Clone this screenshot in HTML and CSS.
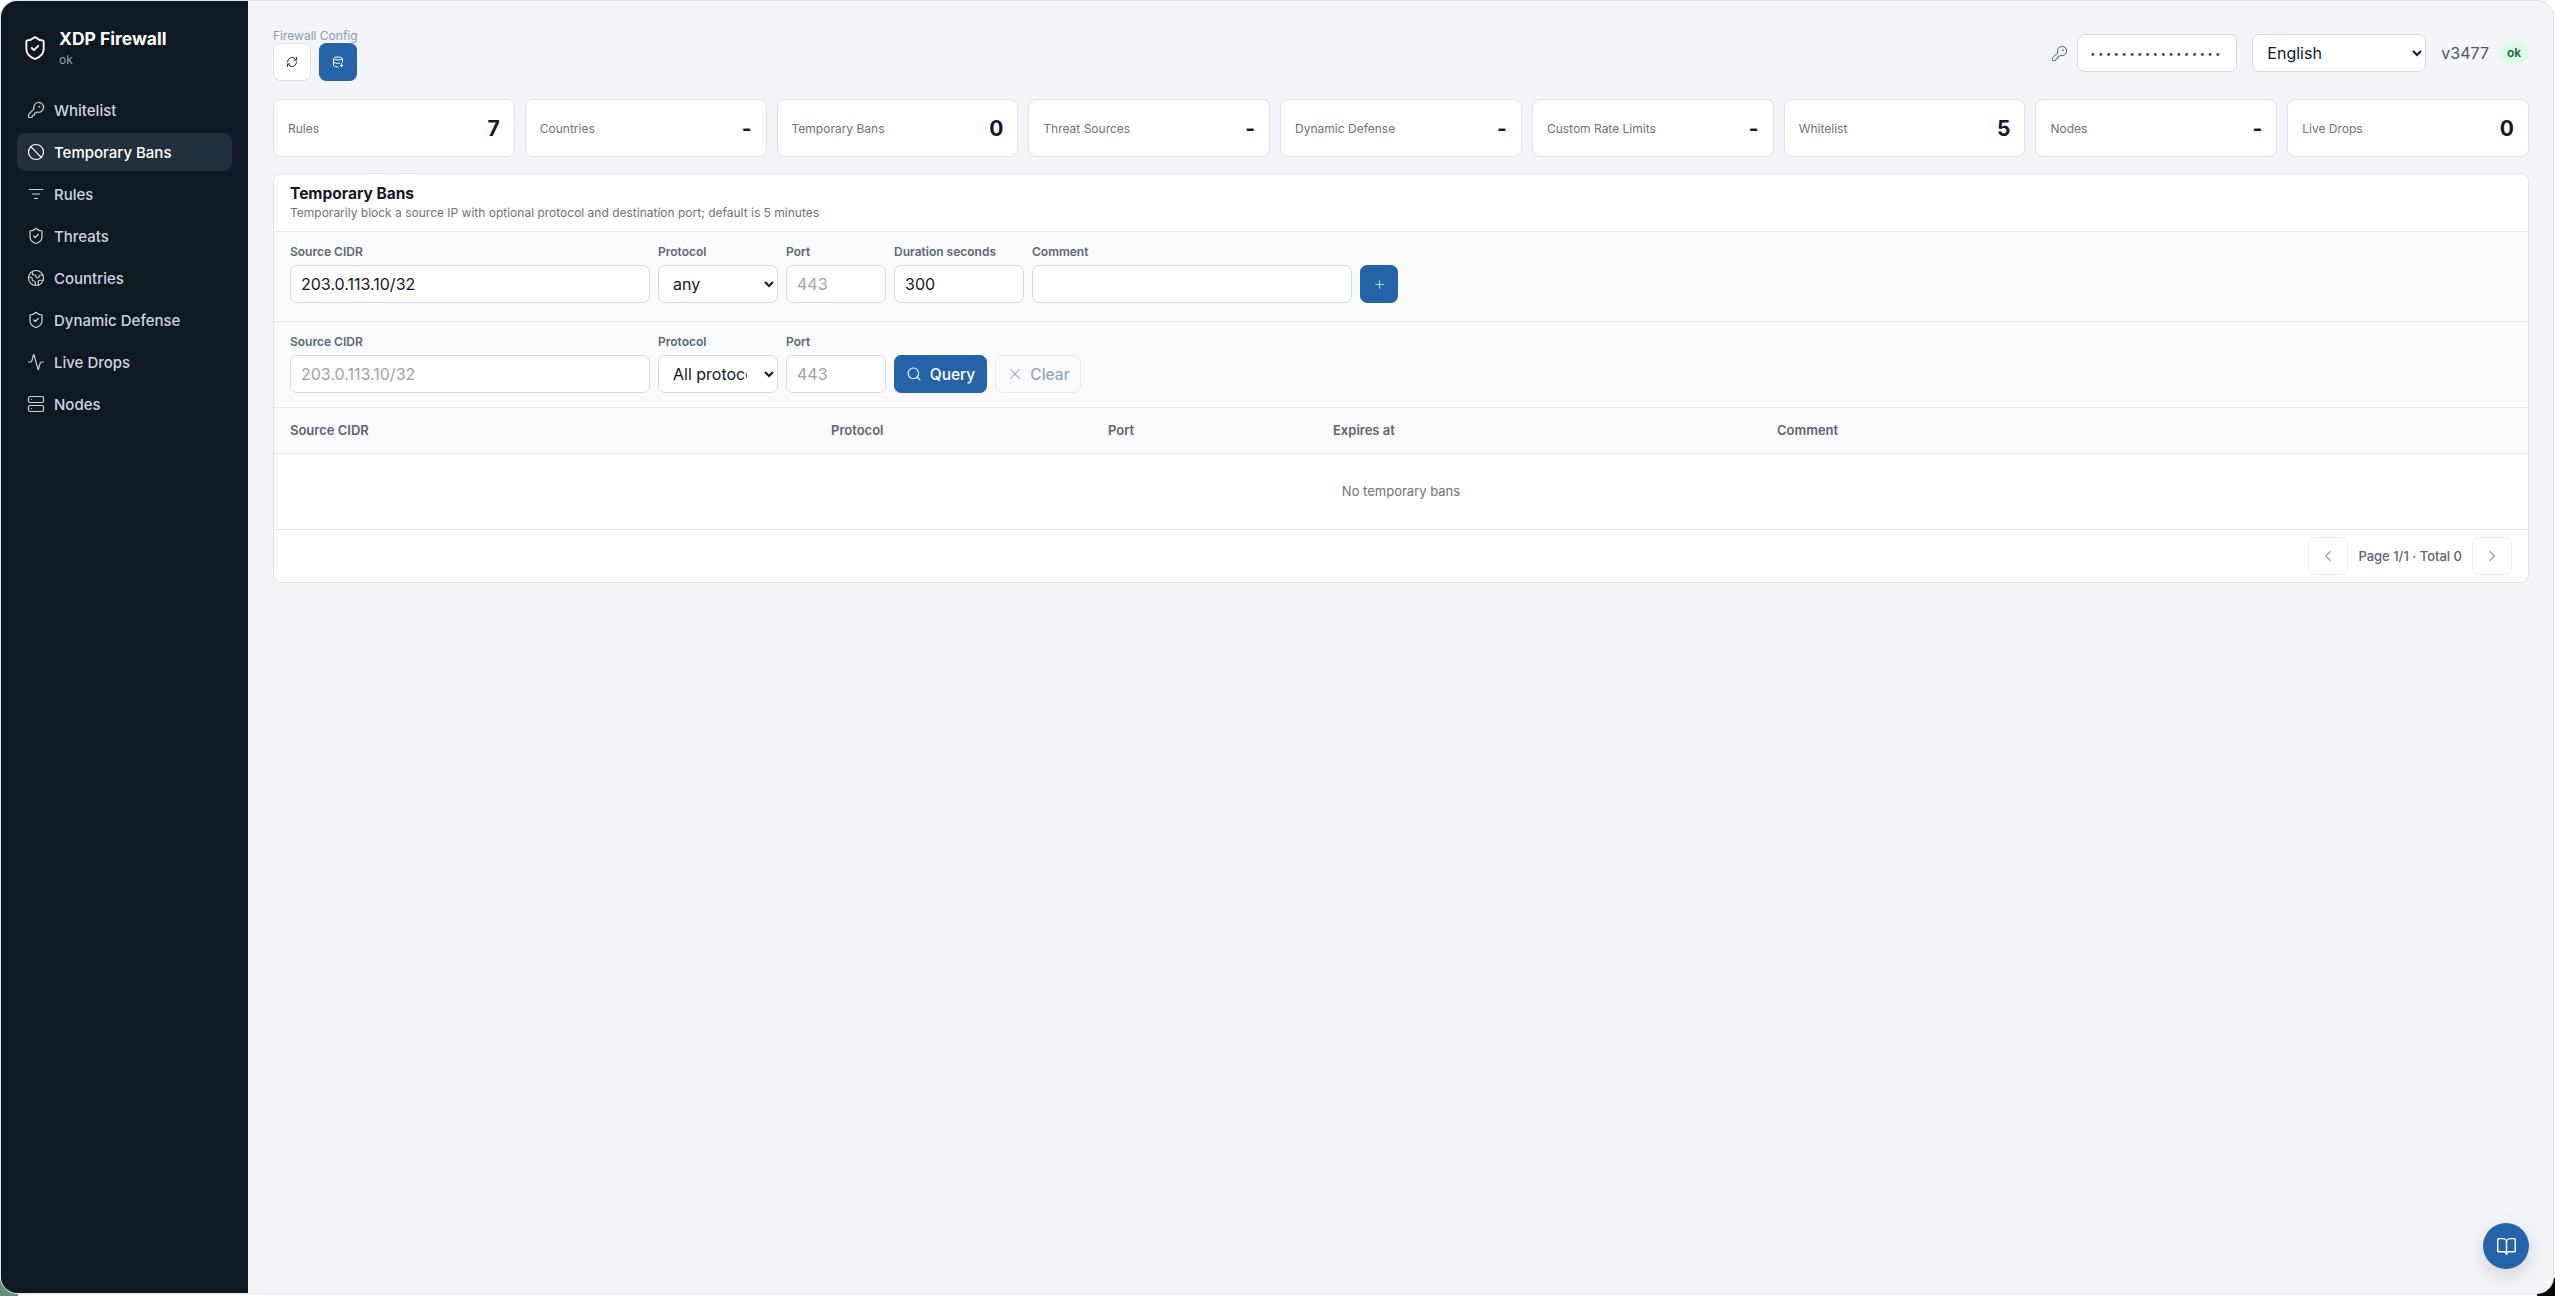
FILE: index.html
```html
<!DOCTYPE html>
<html lang="en">
<head>
  <meta charset="UTF-8">
  <meta name="viewport" content="width=device-width, initial-scale=1.0">
  <link rel="stylesheet" href="styles.css">
  <title>XDP Firewall</title>
</head>
<body>

  <svg class="icon-defs" width="0" height="0">
    <symbol id="i-shield" viewBox="0 0 24 24"><path d="M20 13c0 5-3.5 7.5-7.66 8.95a1 1 0 0 1-.67-.01C7.5 20.5 4 18 4 13V6a1 1 0 0 1 1-1c2 0 4.5-1.2 6.24-2.72a1.17 1.17 0 0 1 1.52 0C14.51 3.81 17 5 19 5a1 1 0 0 1 1 1z"/><path d="m9 12 2 2 4-4"/></symbol>
    <symbol id="i-key" viewBox="0 0 24 24"><path d="M2.586 17.414A2 2 0 0 0 2 18.828V21a1 1 0 0 0 1 1h3a1 1 0 0 0 1-1v-1a1 1 0 0 1 1-1h1a1 1 0 0 0 1-1v-1a1 1 0 0 1 1-1h.172a2 2 0 0 0 1.414-.586l.814-.814a6.5 6.5 0 1 0-4-4z"/><circle cx="16.5" cy="7.5" r=".5"/></symbol>
    <symbol id="i-ban" viewBox="0 0 24 24"><circle cx="12" cy="12" r="10"/><path d="m4.9 4.9 14.2 14.2"/></symbol>
    <symbol id="i-filter" viewBox="0 0 24 24"><path d="M3 6h18"/><path d="M7 12h10"/><path d="M10 18h4"/></symbol>
    <symbol id="i-earth" viewBox="0 0 24 24"><path d="M21.54 15H17a2 2 0 0 0-2 2v4.54"/><path d="M7 3.34V5a3 3 0 0 0 3 3a2 2 0 0 1 2 2c0 1.1.9 2 2 2a2 2 0 0 0 2-2c0-1.1.9-2 2-2h3.17"/><path d="M11 21.95V18a2 2 0 0 0-2-2a2 2 0 0 1-2-2v-1a2 2 0 0 0-2-2H2.05"/><circle cx="12" cy="12" r="10"/></symbol>
    <symbol id="i-activity" viewBox="0 0 24 24"><path d="M22 12h-2.48a2 2 0 0 0-1.93 1.46l-2.35 8.36a.25.25 0 0 1-.48 0L9.24 2.18a.25.25 0 0 0-.48 0l-2.35 8.36A2 2 0 0 1 4.49 12H2"/></symbol>
    <symbol id="i-server" viewBox="0 0 24 24"><rect x="2" y="2" width="20" height="8" rx="2"/><rect x="2" y="14" width="20" height="8" rx="2"/><path d="M6 6h.01"/><path d="M6 18h.01"/></symbol>
    <symbol id="i-refresh" viewBox="0 0 24 24"><path d="M3 12a9 9 0 0 1 9-9 9.75 9.75 0 0 1 6.74 2.74L21 8"/><path d="M21 3v5h-5"/><path d="M21 12a9 9 0 0 1-9 9 9.75 9.75 0 0 1-6.74-2.74L3 16"/><path d="M8 16H3v5"/></symbol>
    <symbol id="i-database" viewBox="0 0 24 24"><ellipse cx="12" cy="5" rx="9" ry="3"/><path d="M3 5v14a9 3 0 0 0 9 3"/><path d="M21 5v7"/><path d="M3 12a9 3 0 0 0 12 2.8"/><path d="M19 15v6"/><path d="m16.5 18.5 2.5 2.5 2.5-2.5"/></symbol>
    <symbol id="i-search" viewBox="0 0 24 24"><circle cx="11" cy="11" r="8"/><path d="m21 21-4.3-4.3"/></symbol>
    <symbol id="i-x" viewBox="0 0 24 24"><path d="M18 6 6 18"/><path d="m6 6 12 12"/></symbol>
    <symbol id="i-left" viewBox="0 0 24 24"><path d="m15 18-6-6 6-6"/></symbol>
    <symbol id="i-right" viewBox="0 0 24 24"><path d="m9 18 6-6-6-6"/></symbol>
    <symbol id="i-plus" viewBox="0 0 24 24"><path d="M5 12h14"/><path d="M12 5v14"/></symbol>
    <symbol id="i-book" viewBox="0 0 24 24"><path d="M12 7v14"/><path d="M3 18a1 1 0 0 1-1-1V4a1 1 0 0 1 1-1h5a4 4 0 0 1 4 4 4 4 0 0 1 4-4h5a1 1 0 0 1 1 1v13a1 1 0 0 1-1 1h-6a3 3 0 0 0-3 3 3 3 0 0 0-3-3z"/></symbol>
  </svg>

  <div class="window">
    <aside class="sidebar">
      <div class="brand">
        <svg class="brand-icon"><use href="#i-shield"/></svg>
        <div>
          <div class="brand-name">XDP Firewall</div>
          <div class="brand-status">ok</div>
        </div>
      </div>
      <nav class="nav">
        <a class="nav-item"><svg class="icon"><use href="#i-key"/></svg>Whitelist</a>
        <a class="nav-item active"><svg class="icon"><use href="#i-ban"/></svg>Temporary Bans</a>
        <a class="nav-item"><svg class="icon"><use href="#i-filter"/></svg>Rules</a>
        <a class="nav-item"><svg class="icon"><use href="#i-shield"/></svg>Threats</a>
        <a class="nav-item"><svg class="icon"><use href="#i-earth"/></svg>Countries</a>
        <a class="nav-item"><svg class="icon"><use href="#i-shield"/></svg>Dynamic Defense</a>
        <a class="nav-item"><svg class="icon"><use href="#i-activity"/></svg>Live Drops</a>
        <a class="nav-item"><svg class="icon"><use href="#i-server"/></svg>Nodes</a>
      </nav>
    </aside>

    <main class="main">
      <header class="topbar">
        <div>
          <div class="config-label">Firewall Config</div>
          <div class="config-btns">
            <button class="btn btn-icon"><svg class="icon-tool"><use href="#i-refresh"/></svg></button>
            <button class="btn btn-icon btn-primary"><svg class="icon-tool"><use href="#i-database"/></svg></button>
          </div>
        </div>
        <div class="topbar-right">
          <svg class="token-icon"><use href="#i-key"/></svg>
          <input class="field token-input" type="password" value="abcdefghijklmnopqrst">
          <select class="field lang-select"><option>English</option></select>
          <span class="version">v3477</span>
          <span class="badge">ok</span>
        </div>
      </header>

      <section class="stats">
        <div class="stat"><span class="stat-label">Rules</span><span class="stat-value">7</span></div>
        <div class="stat"><span class="stat-label">Countries</span><span class="stat-value">-</span></div>
        <div class="stat"><span class="stat-label">Temporary Bans</span><span class="stat-value">0</span></div>
        <div class="stat"><span class="stat-label">Threat Sources</span><span class="stat-value">-</span></div>
        <div class="stat"><span class="stat-label">Dynamic Defense</span><span class="stat-value">-</span></div>
        <div class="stat"><span class="stat-label">Custom Rate Limits</span><span class="stat-value">-</span></div>
        <div class="stat"><span class="stat-label">Whitelist</span><span class="stat-value">5</span></div>
        <div class="stat"><span class="stat-label">Nodes</span><span class="stat-value">-</span></div>
        <div class="stat"><span class="stat-label">Live Drops</span><span class="stat-value">0</span></div>
      </section>

      <section class="panel">
        <div class="panel-head">
          <h2>Temporary Bans</h2>
          <p>Temporarily block a source IP with optional protocol and destination port; default is 5 minutes</p>
        </div>

        <div class="form-row add-row">
          <label class="group w-cidr"><span>Source CIDR</span><input class="field" type="text" value="203.0.113.10/32"></label>
          <label class="group w-proto"><span>Protocol</span><select class="field"><option>any</option></select></label>
          <label class="group w-port"><span>Port</span><input class="field" type="text" placeholder="443"></label>
          <label class="group w-duration"><span>Duration seconds</span><input class="field" type="text" value="300"></label>
          <label class="group w-comment"><span>Comment</span><input class="field" type="text"></label>
          <button class="btn btn-icon btn-primary"><svg class="icon-plus"><use href="#i-plus"/></svg></button>
        </div>

        <div class="form-row">
          <label class="group w-cidr"><span>Source CIDR</span><input class="field" type="text" placeholder="203.0.113.10/32"></label>
          <label class="group w-proto"><span>Protocol</span><select class="field"><option>All protocols</option></select></label>
          <label class="group w-port"><span>Port</span><input class="field" type="text" placeholder="443"></label>
          <button class="btn btn-primary btn-query"><svg class="icon-search"><use href="#i-search"/></svg>Query</button>
          <button class="btn btn-clear" disabled><svg class="icon-x"><use href="#i-x"/></svg>Clear</button>
        </div>

        <table class="table">
          <thead>
            <tr>
              <th class="col-cidr">Source CIDR</th>
              <th class="col-proto">Protocol</th>
              <th class="col-port">Port</th>
              <th class="col-exp">Expires at</th>
              <th>Comment</th>
            </tr>
          </thead>
          <tbody>
            <tr><td class="empty" colspan="5">No temporary bans</td></tr>
          </tbody>
        </table>

        <div class="pager">
          <button class="btn btn-icon btn-page"><svg class="icon-chevron"><use href="#i-left"/></svg></button>
          <span>Page 1/1 · Total 0</span>
          <button class="btn btn-icon btn-page"><svg class="icon-chevron"><use href="#i-right"/></svg></button>
        </div>
      </section>

      <button class="help-btn"><svg class="icon-help"><use href="#i-book"/></svg></button>
    </main>
  </div>

</body>
</html>
```

FILE: styles.css
```css
* {
  box-sizing: border-box;
}

html,
body {
  height: 100%;
}

/* desktop only shows in the two bottom corners, behind the window radius */
body {
  margin: 0;
  background:
    linear-gradient(#5f9079, #5f9079) 0 100% / 18px 18px no-repeat,
    linear-gradient(#050505, #050505) 100% 100% / 18px 18px no-repeat,
    #fff;
  font-family: Inter, "Noto Sans", sans-serif;
  color: #111827;
  overflow: hidden;
}

.icon-defs {
  position: absolute;
}

svg {
  fill: none;
  stroke: currentColor;
  stroke-width: 2;
  stroke-linecap: round;
  stroke-linejoin: round;
  flex-shrink: 0;
}

.window {
  display: flex;
  width: 2554px;
  height: 1294px;
  border-radius: 17px;
  overflow: hidden;
  background-color: #f3f5f8;
  border: 1px solid #dfe3e8;
}

/* sidebar */
.sidebar {
  width: 247px;
  flex-shrink: 0;
  background-color: #0f1923;
  color: #cbd5e1;
}

.brand {
  display: flex;
  align-items: center;
  gap: 11px;
  padding: 8px 0 0 21px;
  height: 86px;
}

.brand-icon {
  width: 26px;
  height: 26px;
  color: #fff;
  stroke-width: 1.7;
}

.brand-name {
  font-size: 17.5px;
  font-weight: 700;
  line-height: 24px;
  color: #fff;
}

.brand-status {
  font-size: 12px;
  line-height: 18px;
  color: #94a3b8;
}

.nav {
  display: flex;
  flex-direction: column;
  gap: 4px;
  padding: 4px 16px 0;
}

.nav-item {
  display: flex;
  align-items: center;
  gap: 9px;
  height: 38px;
  padding: 0 10px;
  border-radius: 8px;
  font-size: 15px;
  font-weight: 500;
}

.nav-item .icon {
  width: 18px;
  height: 18px;
  stroke-width: 1.6;
}

.nav-item.active {
  background-color: #222f3d;
  color: #fff;
}

/* main area */
.main {
  flex: 1;
  min-width: 0;
  padding: 28px 24px 0 25px;
  position: relative;
}

.topbar {
  display: flex;
  justify-content: space-between;
  align-items: flex-start;
  margin-bottom: 18px;
}

.config-label {
  font-size: 12px;
  line-height: 14px;
  color: #8a9aad;
}

.config-btns {
  display: flex;
  gap: 8px;
}

.btn {
  display: inline-flex;
  align-items: center;
  justify-content: center;
  height: 38px;
  border: 1px solid #d9e0e8;
  border-radius: 7px;
  background-color: #fff;
  font-family: inherit;
  font-size: 15.5px;
  font-weight: 500;
  color: #1f2937;
  padding: 0;
}

.btn-icon {
  width: 38px;
}

.btn-primary {
  background-color: #2563a9;
  border-color: #2563a9;
  color: #fff;
}

.icon-tool {
  width: 12px;
  height: 12px;
  stroke-width: 2;
}

.icon-plus {
  width: 13px;
  height: 13px;
  color: #c7d9ee;
}

.icon-search {
  width: 16px;
  height: 16px;
  stroke-width: 1.6;
}

.icon-x {
  width: 18px;
  height: 18px;
  stroke-width: 1.4;
}

.icon-chevron {
  width: 18px;
  height: 18px;
  stroke-width: 1.6;
}

.topbar-right {
  display: flex;
  align-items: center;
  margin-top: 5px;
}

.token-icon {
  width: 17px;
  height: 17px;
  stroke-width: 1.4;
  color: #4b5563;
  margin-right: 9px;
}

.field {
  height: 38px;
  width: 100%;
  border: 1px solid #d3dae3;
  border-radius: 7px;
  background-color: #fff;
  font-family: inherit;
  font-size: 16px;
  color: #111827;
  padding: 0 10px;
}

.field::placeholder {
  color: #9ca3af;
}

.w-proto .field {
  padding-right: 14px;
}

.token-input {
  width: 160px;
  margin-right: 15px;
  padding: 0 12px;
  font-size: 9px;
  letter-spacing: 2.75px;
  color: #374151;
}

.lang-select {
  width: 174px;
  margin-right: 15px;
}

.version {
  font-size: 16px;
  color: #4b5563;
  margin-right: 10px;
}

.badge {
  width: 30px;
  height: 22px;
  line-height: 22px;
  text-align: center;
  border-radius: 11px;
  background-color: #dcfce7;
  color: #166534;
  font-size: 12px;
  font-weight: 600;
}

/* stat cards */
.stats {
  display: grid;
  grid-template-columns: repeat(9, 1fr);
  gap: 10px;
  margin-bottom: 16px;
}

.stat {
  display: flex;
  align-items: center;
  justify-content: space-between;
  height: 58px;
  padding: 0 14px;
  background-color: #fff;
  border: 1px solid #dfe4ea;
  border-radius: 8px;
}

.stat-label {
  font-size: 12px;
  color: #6b7280;
}

.stat-value {
  font-size: 21px;
  font-weight: 700;
  color: #111827;
}

/* panel */
.panel {
  background-color: #fff;
  border: 1px solid #dfe4ea;
  border-radius: 8px;
  overflow: hidden;
}

.panel-head {
  height: 58px;
  padding: 9px 16px 0;
  border-bottom: 1px solid #e5e9ee;
}

.panel-head h2 {
  margin: 0;
  font-size: 15.5px;
  line-height: 22px;
  font-weight: 700;
}

.panel-head p {
  margin: 0;
  font-size: 12px;
  line-height: 16px;
  color: #6b7280;
}

.form-row {
  display: flex;
  align-items: flex-end;
  gap: 8px;
  padding: 12px 16px 14px;
  background-color: #f9fbfd;
  border-bottom: 1px solid #e5e9ee;
}

.add-row {
  padding-bottom: 18px;
}

.group {
  display: flex;
  flex-direction: column;
  gap: 5px;
}

.group span {
  font-size: 12px;
  line-height: 16px;
  font-weight: 600;
  color: #5b6675;
}

.w-cidr {
  width: 360px;
}

.w-proto {
  width: 120px;
}

.w-port {
  width: 100px;
}

.w-duration {
  width: 130px;
}

.w-comment {
  width: 320px;
}

.btn-query {
  width: 93px;
  gap: 8px;
}

.btn-clear {
  width: 86px;
  gap: 6px;
  background-color: transparent;
  border-color: #e5e9ee;
  color: #9ca3af;
}

/* table */
.table {
  width: 100%;
  border-collapse: collapse;
  table-layout: fixed;
}

.table th {
  height: 45px;
  padding: 0 16px;
  text-align: left;
  font-size: 13px;
  font-weight: 600;
  color: #5b6675;
  background-color: #f9fbfd;
  border-bottom: 1px solid #e5e9ee;
}

.col-cidr {
  width: 541px;
}

.col-proto {
  width: 277px;
}

.col-port {
  width: 225px;
}

.col-exp {
  width: 444px;
}

.empty {
  height: 76px;
  text-align: center;
  font-size: 13px;
  color: #6b7280;
  border-bottom: 1px solid #e5e9ee;
}

.pager {
  display: flex;
  align-items: center;
  justify-content: flex-end;
  gap: 10px;
  height: 52px;
  padding-right: 16px;
  font-size: 13px;
  font-weight: 500;
  color: #5b6675;
}

.btn-page {
  width: 40px;
  border-color: #e8ecf0;
  color: #9ca3af;
}

.help-btn {
  position: absolute;
  right: 24px;
  bottom: 24px;
  width: 46px;
  height: 46px;
  display: flex;
  align-items: center;
  justify-content: center;
  border: none;
  border-radius: 50%;
  background-color: #2563a9;
  color: #fff;
  box-shadow: 0 6px 18px rgba(15, 25, 35, 0.16);
}

.icon-help {
  width: 21px;
  height: 21px;
  stroke-width: 1.6;
}
```
